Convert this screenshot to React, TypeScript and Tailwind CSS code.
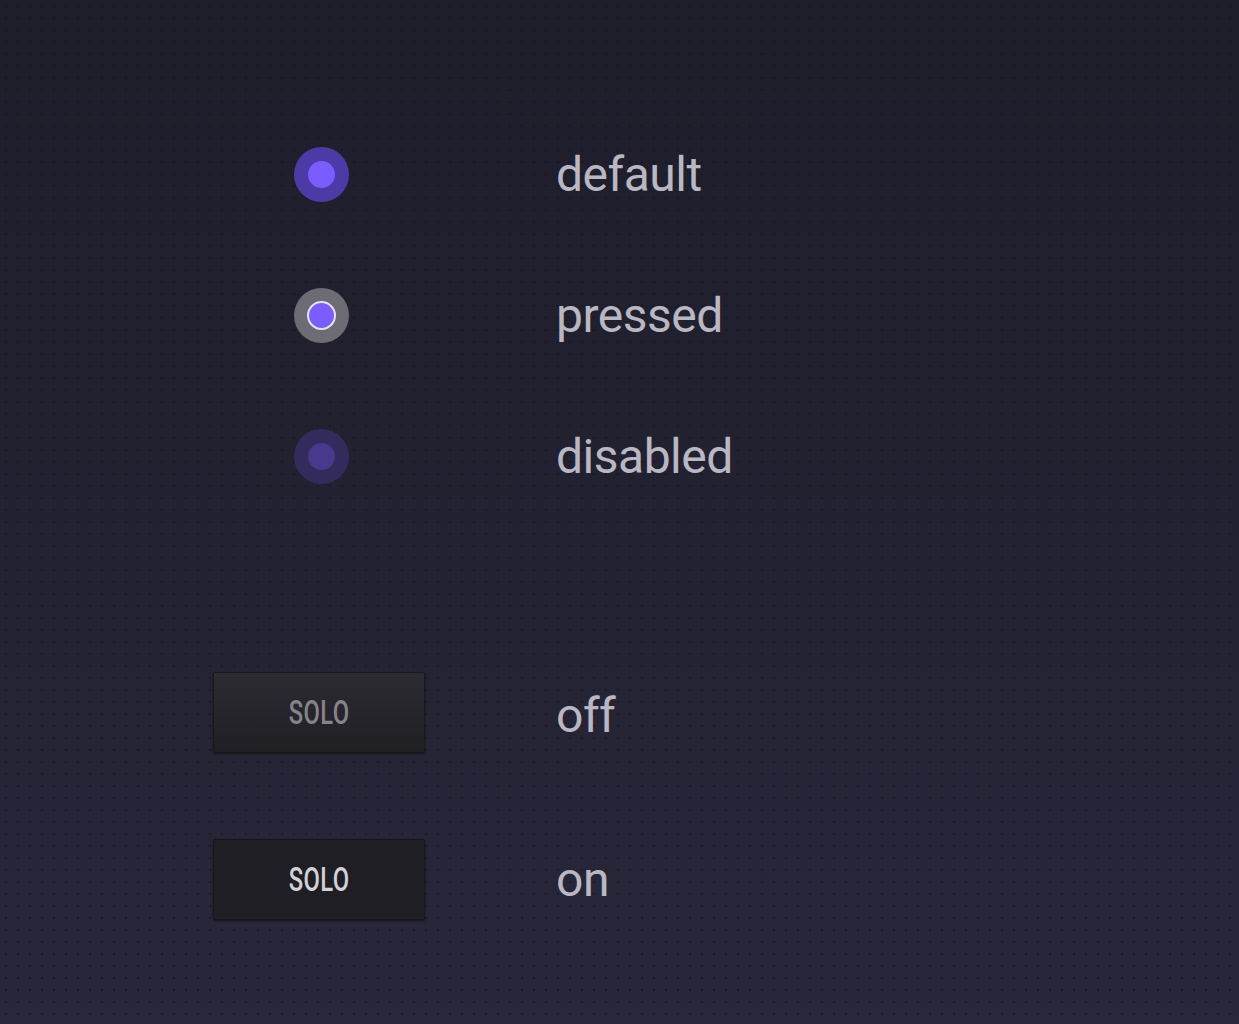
import React from 'react';

type RadioState = 'default' | 'pressed' | 'disabled';

const Radio: React.FC<{ state: RadioState }> = ({ state }) => {
  if (state === 'pressed') {
    return (
      <div className="w-[55px] h-[55px] rounded-full bg-[#6d6c74] flex items-center justify-center">
        <div className="w-[29px] h-[29px] rounded-full bg-[#7b5cff] border-2 border-[#e4e2f0]" />
      </div>
    );
  }
  if (state === 'disabled') {
    return (
      <div className="w-[55px] h-[55px] rounded-full bg-[#322b5c] flex items-center justify-center">
        <div className="w-[27px] h-[27px] rounded-full bg-[#49398d]" />
      </div>
    );
  }
  return (
    <div className="w-[55px] h-[55px] rounded-full bg-[#4c3ba6] flex items-center justify-center">
      <div className="w-[27px] h-[27px] rounded-full bg-[#7b5cff]" />
    </div>
  );
};

const SoloButton: React.FC<{ on?: boolean }> = ({ on }) => (
  <button
    className={
      on
        ? 'w-[212px] h-[81px] rounded-[2px] bg-[#1f1e24] border border-[#17161b] shadow-[0_1px_2px_rgba(0,0,0,0.5)] flex items-center justify-center'
        : 'w-[212px] h-[81px] rounded-[2px] bg-gradient-to-b from-[#2c2b31] to-[#201f24] border border-[#18171c] shadow-[0_1px_2px_rgba(0,0,0,0.5)] flex items-center justify-center'
    }
  >
    <span
      className={
        on
          ? 'inline-block scale-x-[0.72] text-[33px] leading-none font-medium tracking-[0.5px] text-[#d2d1d8] font-["Roboto",sans-serif]'
          : 'inline-block scale-x-[0.72] text-[33px] leading-none font-medium tracking-[0.5px] text-[#85838c] font-["Roboto",sans-serif]'
      }
    >
      SOLO
    </span>
  </button>
);

const Label: React.FC<{ children: React.ReactNode }> = ({ children }) => (
  <span className="text-[48px] leading-none font-normal tracking-[-0.5px] text-[#b9b7c2] font-['Roboto',sans-serif]">
    {children}
  </span>
);

export default function App() {
  const radios: RadioState[] = ['default', 'pressed', 'disabled'];

  return (
    <div className="w-[1239px] h-[1024px] overflow-hidden bg-[radial-gradient(circle,rgba(10,10,20,0.35)_1px,transparent_1.6px),linear-gradient(180deg,#1e1d2a_0%,#232232_55%,#29283b_100%)] bg-size-[12px_12px,100%_100%]">
      <div className="pt-[104px] pl-[213px]">
        {radios.map((r) => (
          <div key={r} className="h-[141px] flex items-center">
            <div className="w-[212px] flex justify-center pl-[4px]">
              <Radio state={r} />
            </div>
            <div className="ml-[131px]">
              <Label>{r}</Label>
            </div>
          </div>
        ))}

        <div className="mt-[102px]">
          <div className="h-[167px] flex items-center">
            <SoloButton />
            <div className="ml-[131px] pt-[6px]">
              <Label>off</Label>
            </div>
          </div>
          <div className="h-[167px] flex items-center">
            <SoloButton on />
            <div className="ml-[131px]">
              <Label>on</Label>
            </div>
          </div>
        </div>
      </div>
    </div>
  );
}
